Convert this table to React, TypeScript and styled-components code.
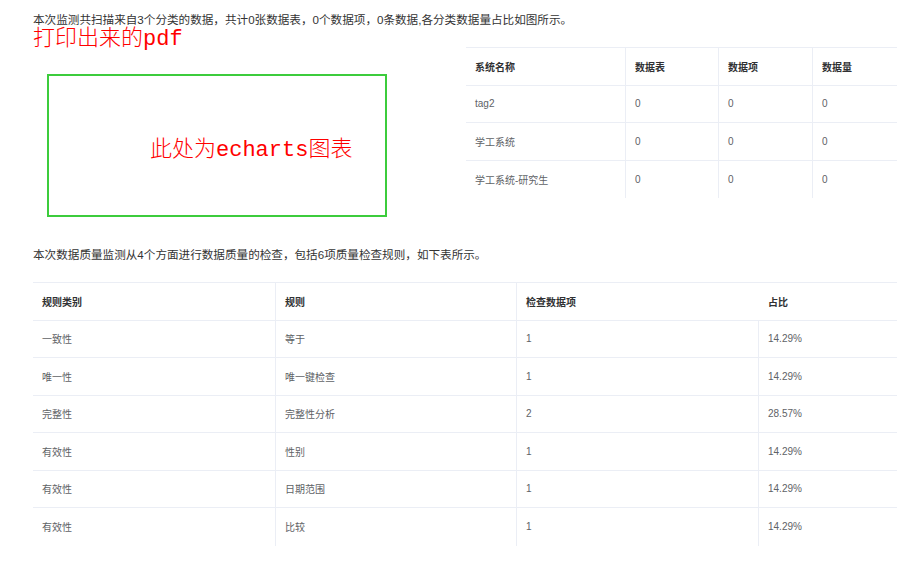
import styled, { createGlobalStyle } from "styled-components";

const GlobalStyle = createGlobalStyle`
  body {
    margin: 0;
    background: #fff;
    font-family: "Liberation Sans", "Noto Sans CJK SC", sans-serif;
  }
`;

const Page = styled.div`
  width: 864px;
  padding: 12px 10px 30px 33px;
`;

const Paragraph = styled.p<{ $gap?: number }>`
  margin: ${(p) => p.$gap ?? 0}px 0 0;
  font-size: 11.6px;
  line-height: 16px;
  color: #333;
  white-space: nowrap;
`;

const Row = styled.div`
  display: flex;
  align-items: flex-start;
`;

const LeftCol = styled.div`
  width: 433px;
  flex: none;
`;

const PdfLabel = styled.div`
  height: 10px;
  margin-top: 2px;
  font-family: "Noto Sans CJK SC", sans-serif;
  font-size: 22px;
  font-weight: 300;
  line-height: 10px;
  color: #ff0000;
  white-space: nowrap;
`;

const Latin = styled.span`
  font-family: "Liberation Mono", monospace;
  font-weight: 400;
  line-height: 0;
`;

const ChartBox = styled.div`
  box-sizing: border-box;
  width: 340px;
  height: 143px;
  margin: 34px 0 0 14px;
  padding: 0 0 0 101px;
  border: 2px solid #3ccc3c;
  display: flex;
  align-items: center;
  font-family: "Noto Sans CJK SC", sans-serif;
  font-size: 22px;
  font-weight: 300;
  line-height: 22px;
  color: #ff0000;
  white-space: nowrap;
`;

const Table = styled.div<{ $cols: string; $gap?: number }>`
  display: grid;
  grid-template-columns: ${(p) => p.$cols};
  border-top: 1px solid #ebeef5;
  margin-top: ${(p) => p.$gap ?? 0}px;
`;

const Cell = styled.div<{ $head?: boolean; $divider?: boolean; $last?: boolean }>`
  box-sizing: border-box;
  height: 37.5px;
  padding: 0 9px;
  display: flex;
  align-items: center;
  font-size: 10px;
  font-weight: ${(p) => (p.$head ? 700 : 400)};
  color: ${(p) => (p.$head ? "#303133" : "#606266")};
  border-bottom: ${(p) => (p.$last ? "none" : "1px solid #ebeef5")};
  border-right: ${(p) => (p.$divider ? "1px solid #ebeef5" : "none")};
  white-space: nowrap;
`;

const SideTable = styled.div`
  width: 431px;
  margin-top: 19px;
`;

const systems = [
  ["tag2", "0", "0", "0"],
  ["学工系统", "0", "0", "0"],
  ["学工系统-研究生", "0", "0", "0"],
];

const rules = [
  ["一致性", "等于", "1", "14.29%"],
  ["唯一性", "唯一键检查", "1", "14.29%"],
  ["完整性", "完整性分析", "2", "28.57%"],
  ["有效性", "性别", "1", "14.29%"],
  ["有效性", "日期范围", "1", "14.29%"],
  ["有效性", "比较", "1", "14.29%"],
];

export default function App() {
  return (
    <Page>
      <GlobalStyle />
      <Paragraph>
        本次监测共扫描来自3个分类的数据，共计0张数据表，0个数据项，0条数据,各分类数据量占比如图所示。
      </Paragraph>
      <Row>
        <LeftCol>
          <PdfLabel>
            打印出来的<Latin>pdf</Latin>
          </PdfLabel>
          <ChartBox>
            <span>
              此处为<Latin>echarts</Latin>图表
            </span>
          </ChartBox>
        </LeftCol>
        <SideTable>
          <Table $cols="160px 93px 94px 84px">
            {["系统名称", "数据表", "数据项", "数据量"].map((h, i) => (
              <Cell key={h} $head $divider={i < 3}>
                {h}
              </Cell>
            ))}
            {systems.map((r, ri) =>
              r.map((v, i) => (
                <Cell key={`${ri}-${i}`} $divider={i < 3} $last={ri === systems.length - 1}>
                  {v}
                </Cell>
              ))
            )}
          </Table>
        </SideTable>
      </Row>
      <Paragraph $gap={30}>
        本次数据质量监测从4个方面进行数据质量的检查，包括6项质量检查规则，如下表所示。
      </Paragraph>
      <Table $cols="243px 241px 242px 138px" $gap={19}>
        {["规则类别", "规则", "检查数据项", "占比"].map((h, i) => (
          <Cell key={h} $head $divider={i < 2}>
            {h}
          </Cell>
        ))}
        {rules.map((r, ri) =>
          r.map((v, i) => (
            <Cell key={`${ri}-${i}`} $divider={i < 3} $last={ri === rules.length - 1}>
              {v}
            </Cell>
          ))
        )}
      </Table>
    </Page>
  );
}
